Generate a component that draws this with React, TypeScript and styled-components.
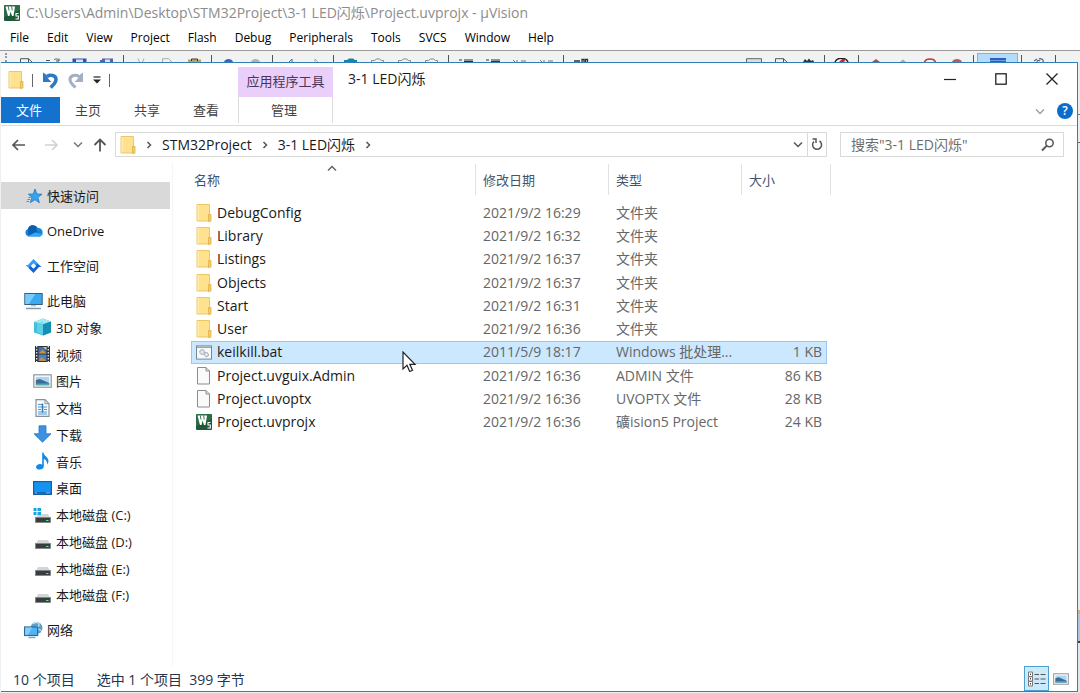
import React from 'react';
import styled, { createGlobalStyle, css } from 'styled-components';

const font = '"Open Sans", "Noto Sans CJK SC", sans-serif';
const accent = '#2f7fb8';

const GlobalStyle = createGlobalStyle`
  *, *::before, *::after { box-sizing: border-box; }
  body { margin: 0; background: #fff; font-family: ${font}; font-size: 13px; color: #1a1a1a; }
  button, input { font: inherit; color: inherit; }
  button { border: 0; padding: 0; background: none; }
  svg { display: block; flex: none; }
  ul { list-style: none; margin: 0; padding: 0; }
`;

/* ---------- IDE behind the explorer ---------- */

const Desktop = styled.div`
  display: flex;
  flex-direction: column;
  min-height: 100vh;
  overflow: hidden;
`;

const IdeTitle = styled.header`
  display: flex;
  align-items: center;
  gap: 6px;
  height: 26px;
  padding-left: 4px;
  color: #8c8c8c;
  font-size: 14px;
  line-height: 18px;
  white-space: nowrap;
`;

const MenuBar = styled.nav`
  display: flex;
  align-items: center;
  gap: 18px;
  height: 24px;
  padding-left: 10px;
`;

const MenuItem = styled.button`
  font-size: 12px;
  font-weight: 500;
  line-height: 18px;
  color: #000;
`;

const IdeToolbar = styled.div`
  display: flex;
  align-items: flex-end;
  height: 12px;
  overflow: hidden;
  border-top: 1px solid #9a9a9a;
  background: #f2f2f2;
  padding-left: 5px;
`;

const Grip = styled.span`
  width: 2px;
  height: 9px;
  margin-right: 5px;
  border-left: 2px dotted #999;
`;

const ToolButton = styled.button<{ $on?: boolean }>`
  display: flex;
  flex: none;
  align-items: flex-end;
  justify-content: center;
  width: ${p => (p.$on ? 41 : 27)}px;
  height: 9px;
  ${p => p.$on && css`background: #b5dbfa; border: 1px solid #7db4e4; border-bottom: 0;`}
`;

const ToolSep = styled.span`
  flex: none;
  width: 1px;
  height: 7px;
  margin: 0 3px;
  background: #555;
`;

const ToolGap = styled.span`
  flex: none;
  width: 146px;
`;

const Backdrop = styled.main`
  display: flex;
  flex: 1;
  padding: 0 2px 1px 1px;
  background: #eef0f2 linear-gradient(
    #e9edf2 0 52px, #6d7680 52px 53px, #e9edf2 53px 80px, #5d6b78 80px 81px,
    #e3ebf2 81px 548px, #d9b27a 548px 552px, #a9c6e4 552px 579px, #33404e 579px 581px, #dfe7ee 581px
  ) right top / 2px 100% no-repeat;
`;

/* ---------- Explorer window ---------- */

const Window = styled.section`
  display: flex;
  flex: 1;
  flex-direction: column;
  min-width: 0;
  border: 1px solid ${accent};
  border-left: 0;
  background: #fff;
`;

const TitleBar = styled.div`
  display: flex;
  height: 34px;
`;

const QuickTools = styled.div`
  display: flex;
  flex: none;
  align-items: center;
  gap: 8px;
  width: 237px;
  padding-left: 7px;
`;

const Divider = styled.span`
  width: 1px;
  height: 13px;
  background: #666;
`;

const ContextLabel = styled.div`
  flex: none;
  width: 95px;
  margin-top: 4px;
  background: #ebcffb;
  color: #4a3556;
  line-height: 28px;
  text-align: center;
`;

const WindowTitle = styled.h1`
  flex: 1;
  margin: 0 0 0 15px;
  font-size: 14px;
  font-weight: 400;
  line-height: 32px;
`;

const Caption = styled.div`
  display: flex;
  height: 32px;
`;

const CaptionButton = styled.button`
  display: grid;
  place-items: center;
  width: 51px;
`;

const Ribbon = styled.div`
  display: flex;
  height: 29px;
  border-bottom: 1px solid #dadbdc;
`;

const Tab = styled.button<{ $kind?: 'file' | 'context' }>`
  width: 59px;
  height: 26px;
  padding-right: 3px;
  line-height: 26px;
  color: #444;
  ${p => p.$kind === 'file' && css`background: #1272ce; color: #fff;`}
  ${p => p.$kind === 'context' && css`
    width: 95px;
    border: solid #dcdcdc;
    border-width: 0 1px;
    margin-left: 1px;
  `}
`;

const RibbonEnd = styled.div`
  display: flex;
  align-items: center;
  gap: 12px;
  margin-left: auto;
  padding-right: 4px;
`;

const HelpButton = styled.button`
  width: 16px;
  height: 16px;
  border-radius: 8px;
  background: #0b6ccb;
  color: #fff;
  font-size: 12px;
  font-weight: 600;
  line-height: 16px;
`;

const NavRow = styled.div`
  display: flex;
  align-items: center;
  height: 37px;
  padding: 0 13px 0 10px;
`;

const NavButtons = styled.div`
  display: grid;
  grid-template-columns: 33px 29px 20px 14px;
  align-items: center;
  margin-right: 8px;
`;

const AddressBar = styled.div`
  display: flex;
  flex: 1;
  align-items: center;
  gap: 10px;
  height: 25px;
  padding-left: 4px;
  border: 1px solid #d9d9d9;
`;

const Crumb = styled.button`
  font-size: 14px;
  line-height: 20px;
`;

const AddressEnd = styled.div`
  display: flex;
  align-items: center;
  gap: 4px;
  height: 23px;
  margin-left: auto;
`;

const Refresh = styled.button`
  display: grid;
  place-items: center;
  width: 19px;
  height: 23px;
  border-left: 1px solid #d9d9d9;
`;

const SearchBox = styled.label`
  display: flex;
  align-items: center;
  width: 224px;
  height: 25px;
  margin-left: 13px;
  padding: 0 8px 0 10px;
  border: 1px solid #d9d9d9;
`;

const SearchInput = styled.input`
  flex: 1;
  min-width: 0;
  padding: 0;
  border: 0;
  outline: 0;
  background: none;
  font-size: 14px;
  &::placeholder { color: #6d6d6d; opacity: 1; }
`;

const Body = styled.div`
  display: flex;
  flex: 1;
`;

const SideNav = styled.nav`
  flex: none;
  width: 172px;
  padding-top: 19px;
  border-right: 1px solid #f5f5f5;
`;

const SideGroup = styled.ul`
  margin-bottom: 8px;
`;

const DriveGroup = styled(SideGroup)`
  display: grid;
  grid-template-rows: repeat(12, minmax(0, 1fr));
  height: 321px;
`;

const SideLink = styled.a<{ $nested?: boolean; $active?: boolean }>`
  display: flex;
  align-items: center;
  gap: 4px;
  width: 169px;
  height: 27px;
  padding-left: ${p => (p.$nested ? 32 : 23)}px;
  background: ${p => (p.$active ? '#d9d9d9' : 'transparent')};
  color: #1a1a1a;
  text-decoration: none;
  white-space: nowrap;
`;

const Pane = styled.div`
  position: relative;
  flex: 1;
  min-width: 0;
  padding: 1px 0 0 18px;
`;

const FileTable = styled.table`
  width: 636px;
  height: 270px;
  border-collapse: collapse;
  table-layout: fixed;
`;

const HeadCell = styled.th<{ $w: number; $last?: boolean }>`
  position: relative;
  width: ${p => p.$w}px;
  height: 37px;
  padding: 0 0 6px 7px;
  font-weight: 400;
  text-align: left;
  &:first-child { padding-left: 3px; }
  &::after {
    content: '';
    position: absolute;
    top: 0;
    right: ${p => (p.$last ? -4 : 0)}px;
    width: 1px;
    height: 31px;
    background: #e2e2e2;
  }
`;

const SortButton = styled.button`
  color: #44546f;
`;

const SortMark = styled.span`
  position: absolute;
  top: 1px;
  left: 50%;
  margin-left: -7px;
`;

const Row = styled.tr<{ $selected?: boolean }>`
  ${p => p.$selected && css`
    background: #cce8ff;
    outline: 1px solid #99c8ec;
    outline-offset: -1px;
  `}
`;

const Cell = styled.td<{ $right?: boolean }>`
  padding: 0 5px 0 7px;
  color: #666;
  font-size: 14px;
  line-height: 20px;
  text-align: ${p => (p.$right ? 'right' : 'left')};
  white-space: nowrap;
`;

const NameCell = styled(Cell)`
  padding-left: 5px;
  color: #1a1a1a;
`;

const FileName = styled.span`
  display: flex;
  align-items: center;
  gap: 5px;
`;

const Pointer = styled.span`
  position: absolute;
  top: 188px;
  left: 229px;
`;

const StatusBar = styled.footer`
  display: flex;
  align-items: center;
  height: 25px;
  padding: 0 8px 0 12px;
  gap: 22px;
  color: #26354f;
  font-size: 14px;
`;

const ViewButtons = styled.div`
  display: flex;
  gap: 4px;
  margin-left: auto;
`;

const ViewButton = styled.button<{ $on?: boolean }>`
  display: grid;
  place-items: center;
  width: ${p => (p.$on ? 25 : 16)}px;
  height: 25px;
  ${p => p.$on && css`background: #cdeafb; border: 1px solid #4c9fce;`}
`;

/* ---------- Drawings ---------- */

const Svg = ({ w = 16, h = 16, box, children }: { w?: number; h?: number; box?: string; children: React.ReactNode }) => (
  <svg width={w} height={h} viewBox={box ?? `0 0 ${w} ${h}`} fill="none" aria-hidden="true">{children}</svg>
);

const KeilIcon = () => (
  <Svg>
    <rect width="16" height="16" rx="1" fill="#1f5a38" />
    <path d="M0 0h16v5L0 12z" fill="#357a52" opacity=".6" />
    <path d="M1.500 1.500h9.500L9.500 11H8L6.500 6.500 5.500 11H4z" fill="#fff" />
    <path d="M4.300 1.500l.7 4M7.700 1.500l.5 4" stroke="#2b6b46" strokeWidth=".9" />
    <path d="M14.500 8.500H12v2.500h2.300V14h-2.800" stroke="#fff" strokeWidth="1.100" />
  </Svg>
);

const FolderIcon = () => (
  <Svg w={16} h={18}>
    <path d="M1 .5h12.500v16.500H1z" fill="#ffe28d" stroke="#ebc765" />
    <path d="M1.500 1h1.500v15.500H1.500z" fill="#ffebae" />
    <path d="M12.500 10.500h2.500v6.500l-2.500.5z" fill="#f6cf62" stroke="#deb04a" strokeWidth=".8" />
  </Svg>
);

const FileIcon = () => (
  <Svg w={16} h={18}>
    <path d="M1.500.5h8.500l3.500 3.500v13h-12z" fill="#fafafa" stroke="#8c8c8c" />
    <path d="M10 .5v3.500h3.500" stroke="#8c8c8c" />
  </Svg>
);

const BatIcon = () => (
  <Svg w={16} h={15} box="0 0 17 15">
    <rect x=".5" y=".5" width="16" height="14" fill="#f8f9fa" stroke="#6f8090" />
    <path d="M1 2h15" stroke="#94a5b4" strokeWidth="1.500" />
    <circle cx="6.500" cy="7" r="2.600" fill="#d3dae0" stroke="#8e9aa5" strokeDasharray="1.400 .6" />
    <circle cx="6.500" cy="7" r=".8" fill="#fff" />
    <circle cx="11" cy="9.800" r="2.300" fill="#cfdcea" stroke="#8799ad" strokeDasharray="1.400 .6" />
    <circle cx="11" cy="9.800" r=".7" fill="#fff" />
  </Svg>
);

const StarIcon = () => (
  <Svg w={19}>
    <path d="M11 1l1.900 5 5.100.2-4.200 3.200 1.600 5.300-4.400-3-4.700 3 1.700-5.300L4.300 6.200l5-.2z" fill="#36a3ee" stroke="#1b78c4" strokeWidth=".8" />
    <path d="M4.500 9.500h2.200M3.500 11.500h2.800M2.500 13.500H5" stroke="#3f8fc9" />
  </Svg>
);

const CloudIcon = () => (
  <Svg w={19}>
    <path d="M4.500 13.500a4 4 0 01-.6-7.600A5.300 5.300 0 0113.600 5a4.300 4.300 0 015 4.500 3.700 3.700 0 01-3.200 4z" fill="#1684d8" />
    <path d="M4 5.900A5.300 5.300 0 0113.600 5l-1.900 1.300 4.700 6.900-12-1.200z" fill="#0a5fb0" />
    <path d="M3.500 13.200l8-4 7 2.300a3.500 3.500 0 01-3 2z" fill="#31a8f0" />
  </Svg>
);

const WorkIcon = () => (
  <Svg w={19}>
    <path d="M9.500 1l5 5-2.500 2.500L9.500 6 5.500 10.500 1.500 7H4z" fill="#2f9df5" />
    <path d="M9.500 15l-5-5L7 7.500 9.500 10l4-4.500L17.500 9H15z" fill="#1763d6" />
    <path d="M9.500 5.300l2.700 2.700-2.700 2.700L6.800 8z" fill="#fff" />
  </Svg>
);

const PcIcon = () => (
  <Svg w={19} h={18}>
    <rect x=".8" y="1.500" width="17.400" height="11" fill="#3aa9f2" stroke="#34617f" />
    <path d="M1.300 2h10L5 12H1.300z" fill="#79cbfa" />
    <path d="M7 13h5v1.500H7z" fill="#b9c6cf" />
    <path d="M2 16.500h15" stroke="#8799a5" strokeWidth="1.500" />
  </Svg>
);

const CubeIcon = () => (
  <Svg w={19} h={18}>
    <path d="M1 4l9-3.500L18 3.500v11L10 17.500 1 14.500z" fill="#3fc0dc" />
    <path d="M1 4l9-3.500L18 3.500l-8 2.700z" fill="#a5e8f4" />
    <path d="M10 6.200l8-2.700v11l-8 3z" fill="#168fb5" />
    <path d="M4 5.500l6-2v13l-6-2z" fill="#6bd6ea" opacity=".7" />
  </Svg>
);

const VideoIcon = () => (
  <Svg w={19} h={18}>
    <rect x="2" y="1" width="15" height="16" fill="#2e3236" />
    <path d="M3.700 1v16M15.300 1v16" stroke="#ddd" strokeWidth="1.400" strokeDasharray="1.500 1.500" />
    <rect x="5.500" y="2" width="8" height="6.500" fill="#3d6fb5" />
    <rect x="5.500" y="9.500" width="8" height="6.500" fill="#4a80c6" />
    <path d="M5.500 8.500l4-4 4 4zM5.500 16l3-4 5 4z" fill="#c98e3e" />
    <path d="M10 2h3.500v3z" fill="#e8cd55" />
  </Svg>
);

const PictureIcon = ({ w = 19, h = 14 }: { w?: number; h?: number }) => (
  <Svg w={w} h={h} box="0 0 19 14">
    <rect x=".8" y=".8" width="17.400" height="12.400" fill="#fff" stroke="#8d9499" strokeWidth="1.200" />
    <rect x="2.800" y="2.800" width="13.400" height="8.400" fill="#a9d6f5" />
    <path d="M2.800 6l4-1 9.400 4v2.200H2.800z" fill="#3c6b94" />
    <path d="M2.800 9.500h13.400v1.700H2.800z" fill="#55a6ad" />
  </Svg>
);

const DocIcon = () => (
  <Svg w={19} h={18}>
    <path d="M3 .7h9l4 4v12.600H3z" fill="#f6f9fb" stroke="#8a9299" strokeWidth="1.200" />
    <path d="M12 .7v4h4" stroke="#8a9299" />
    <path d="M5 5.500h4M5 8h9M5 10.500h3M11 10.500h3M5 13h9M5 15h9" stroke="#4f9bd2" strokeWidth="1.200" />
    <path d="M9.500 4.500v9" stroke="#2f7ab8" strokeWidth="1.500" />
  </Svg>
);

const DownIcon = () => (
  <Svg w={19} h={18}>
    <path d="M6 .8h7v8h5L9.500 17.200 1 8.800h5z" fill="#3b92e4" stroke="#2c73bb" strokeWidth=".8" />
  </Svg>
);

const MusicIcon = () => (
  <Svg w={19} h={18}>
    <path d="M9.200.5h1.300c.3 3.500 5 4.500 5 8.500 0 1.500-.7 2.500-1.500 3.500.5-3-1-4.500-3.200-5.500v7.500c0 1.800-2 3-4 3s-3.800-1-3.800-2.600 2-3 4-3c.8 0 1.600.2 2.200.5z" fill="#1389e6" />
  </Svg>
);

const DesktopIcon = () => (
  <Svg w={19} h={14}>
    <rect x=".6" y=".6" width="17.800" height="12.800" fill="#1593f2" stroke="#1460a5" strokeWidth="1.200" />
    <path d="M1.200 11.800h16.600" stroke="#0e65b8" strokeWidth="1.500" />
    <path d="M2.500 11.800h1M13.500 11.800h1M15.500 11.800h1" stroke="#fff" />
  </Svg>
);

const DriveIcon = ({ system }: { system?: boolean }) => (
  <Svg w={19} h={18}>
    <path d="M5 8h10l2 4H3z" fill="#d3d5d7" />
    <rect x="2.500" y="11.500" width="15" height="5" fill="#3a3d40" stroke="#808487" strokeWidth=".8" />
    <path d="M13 14.500h2.500" stroke="#62e089" />
    {system && <path d="M.5 2h3v3h-3zM4.500 2h3.500v3H4.500zM.5 6h3v3h-3zM4.500 6h3.500v3H4.500z" fill="#16a7e0" />}
  </Svg>
);

const NetworkIcon = () => (
  <Svg w={19} h={18}>
    <circle cx="12.500" cy="7" r="6" fill="#5e9fc4" />
    <path d="M9 3c2-2 5-2 6 0s-2 2-2 4 4 1 4 3" stroke="#b7dcea" strokeWidth="1.500" />
    <rect x=".6" y="6" width="13" height="8.500" fill="#4fb4f5" stroke="#2a6c9d" strokeWidth="1.200" />
    <path d="M1.200 6.600h7L4 14H1.200z" fill="#86cdf9" />
    <path d="M4.500 16.500h7" stroke="#8fa5b3" strokeWidth="1.500" />
  </Svg>
);

const Chevron = ({ dir = 'right', color = '#555' }: { dir?: 'right' | 'down' | 'up'; color?: string }) =>
  dir === 'right' ? (
    <Svg w={6} h={8}><path d="M1.500 1l3 3-3 3" stroke={color} strokeWidth="1.500" /></Svg>
  ) : (
    <Svg w={10} h={7}><path d={dir === 'down' ? 'M1 1.500l4 4 4-4' : 'M1 5.500l4-4 4 4'} stroke={color} strokeWidth="1.500" /></Svg>
  );

const Arrow = ({ dir }: { dir: 'left' | 'right' | 'up' }) => (
  <Svg w={14} h={14}>
    {dir === 'left' && <path d="M14 7H2M7 2L2 7l5 5" stroke="#555" strokeWidth="1.700" />}
    {dir === 'right' && <path d="M1 7h12M8 2l5 5-5 5" stroke="#d2d2d2" strokeWidth="1.600" />}
    {dir === 'up' && <path d="M7 13.500v-12M1.500 7L7 1.500 12.500 7" stroke="#555" strokeWidth="1.800" />}
  </Svg>
);

/* Upper edges of the IDE toolbar glyphs; the rest lies under the explorer. */
const glyphs: Record<string, React.ReactNode> = {
  page: <path d="M2.500 4V.7h8L14 4M10.500.7V4" stroke="#555" />,
  open: <path d="M1 2.500h4M9 2c2-2 4-1 5 1M14 .5V3h-3" stroke="#555" />,
  save: <><path d="M.5 4V.5h14V4z" fill="#3b4ea8" /><path d="M4 1.500h7V4H4z" fill="#dfe5f5" /></>,
  saveAll: <><path d="M1 4V2h2V.5h11V4z" fill="#5661b5" /><path d="M6 1.500h5V4H6z" fill="#dfe5f5" /></>,
  cut: <path d="M5 .5L6.500 4M11 .5L9.500 4" stroke="#aaa" />,
  copy: <path d="M2.500 4V.7h6L11 3v1" stroke="#aaa" />,
  paste: <><path d="M1 4V1.500h13V4z" fill="#b9a45a" /><path d="M4.500 3V1h6v2" stroke="#333" /></>,
  undo: <path d="M3 4c1-4 8-4 9 0z" fill="#3a62c4" />,
  redo: <path d="M3 4c1-4 8-4 9 0z" fill="#aeb3ba" />,
  back: <path d="M7 4l3-3v3" stroke="#3a6fa5" />,
  next: <path d="M9 4L6 1v3" stroke="#aaa" />,
  flag: <path d="M1 4V2h3l2-1.500h4L12 2h2v2z" fill="#1583ad" />,
  flagOff: <path d="M1.500 4V2.500h3l2-1.500h3l2 1.500h2V4" stroke="#888" />,
  indent: <path d="M1 2h3M6 2h9M6 3.500h9" stroke="#333" />,
  comment: <path d="M1 2l2 2M5 2v2M9 3h5" stroke="#777" />,
  find: <path d="M1 3h6M9 4V1.500h2V4M12.500 4V1.500h2V4" stroke="#333" strokeWidth="1.300" />,
  combo: <path d="M.5 4V.7h15V4" stroke="#666" fill="#ddd" />,
  ruler: <path d="M3 4l2-3 2 2 2-2.500L11 3l2-1 1 2z" fill="#333" />,
  stop: <><path d="M1 4C3-1 12-1 14 4" stroke="#222" strokeWidth="1.500" /><path d="M5 4l3-3h4l-2 3z" fill="#d02828" /></>,
  diamond: <path d="M4 4l4-3 4 3z" fill="#b34a44" />,
  diamondOff: <path d="M5 4l3-2.500L11 4z" fill="#aaa" />,
  ring: <path d="M2.500 4C4 0 12 0 13.500 4" stroke="#c03a34" strokeWidth="1.500" />,
  ball: <path d="M3 4c1-4 9-4 10 0z" fill="#c25a54" />,
  win: <><path d="M0 4V0h16v4z" fill="#2b5fc4" /><path d="M0 2.500h16" stroke="#6f9ae6" /></>,
  wrench: <path d="M3 3l3-2M8 .5c3 0 5 1.500 4 3.500M6 4c0-2 2-2 3-1" stroke="#5c6f85" strokeWidth="1.300" />,
};

const toolItems = [
  'page', 'open', 'save', 'saveAll', '|', 'cut', 'copy', 'paste', '|', 'undo', 'redo', '|', 'back', 'next', '|',
  'flag', 'flagOff', 'flagOff', 'flagOff', '|', 'indent', 'indent', 'comment', 'comment', '|', 'find', 'gap',
  'combo', 'page', 'ruler', '|', 'stop', '|', 'diamond', 'diamondOff', 'ring', 'ball', '|', 'win', '|', 'wrench', '|',
];

const menus = ['File', 'Edit', 'View', 'Project', 'Flash', 'Debug', 'Peripherals', 'Tools', 'SVCS', 'Window', 'Help'];

const topLinks = [
  { label: '快速访问', icon: <StarIcon />, active: true },
  { label: 'OneDrive', icon: <CloudIcon /> },
  { label: '工作空间', icon: <WorkIcon /> },
];

const pcLinks = [
  { label: '3D 对象', icon: <CubeIcon /> },
  { label: '视频', icon: <VideoIcon /> },
  { label: '图片', icon: <PictureIcon /> },
  { label: '文档', icon: <DocIcon /> },
  { label: '下载', icon: <DownIcon /> },
  { label: '音乐', icon: <MusicIcon /> },
  { label: '桌面', icon: <DesktopIcon /> },
  { label: '本地磁盘 (C:)', icon: <DriveIcon system /> },
  { label: '本地磁盘 (D:)', icon: <DriveIcon /> },
  { label: '本地磁盘 (E:)', icon: <DriveIcon /> },
  { label: '本地磁盘 (F:)', icon: <DriveIcon /> },
];

const files = [
  { name: 'DebugConfig', date: '2021/9/2 16:29', type: '文件夹', size: '', icon: <FolderIcon /> },
  { name: 'Library', date: '2021/9/2 16:32', type: '文件夹', size: '', icon: <FolderIcon /> },
  { name: 'Listings', date: '2021/9/2 16:37', type: '文件夹', size: '', icon: <FolderIcon /> },
  { name: 'Objects', date: '2021/9/2 16:37', type: '文件夹', size: '', icon: <FolderIcon /> },
  { name: 'Start', date: '2021/9/2 16:31', type: '文件夹', size: '', icon: <FolderIcon /> },
  { name: 'User', date: '2021/9/2 16:36', type: '文件夹', size: '', icon: <FolderIcon /> },
  { name: 'keilkill.bat', date: '2011/5/9 18:17', type: 'Windows 批处理...', size: '1 KB', icon: <BatIcon />, selected: true },
  { name: 'Project.uvguix.Admin', date: '2021/9/2 16:36', type: 'ADMIN 文件', size: '86 KB', icon: <FileIcon /> },
  { name: 'Project.uvoptx', date: '2021/9/2 16:36', type: 'UVOPTX 文件', size: '28 KB', icon: <FileIcon /> },
  { name: 'Project.uvprojx', date: '2021/9/2 16:36', type: '礦ision5 Project', size: '24 KB', icon: <KeilIcon /> },
];

export default function App() {
  return (
    <Desktop>
      <GlobalStyle />
      <IdeTitle>
        <KeilIcon />
        <span>C:\Users\Admin\Desktop\STM32Project\3-1 LED闪烁\Project.uvprojx - µVision</span>
      </IdeTitle>
      <MenuBar>
        {menus.map(m => <MenuItem key={m}>{m}</MenuItem>)}
      </MenuBar>
      <IdeToolbar>
        <Grip />
        {toolItems.map((t, i) =>
          t === '|' ? <ToolSep key={i} /> : t === 'gap' ? <ToolGap key={i} /> : (
            <ToolButton key={i} $on={t === 'win'} aria-label={t}>
              <Svg w={16} h={4}>{glyphs[t]}</Svg>
            </ToolButton>
          ))}
      </IdeToolbar>

      <Backdrop>
        <Window>
          <TitleBar>
            <QuickTools>
              <FolderIcon />
              <Divider />
              <button aria-label="撤消">
                <Svg w={18} h={18}>
                  <path d="M6 5.500c3-2 9-1.500 9 3 0 3.500-2.500 5-5.500 8" stroke="#2f78c4" strokeWidth="3.500" />
                  <path d="M2 1.500v9.500h8.500L7.500 8 5 3.500z" fill="#2f78c4" />
                </Svg>
              </button>
              <button aria-label="恢复">
                <Svg w={18} h={18}>
                  <path d="M12 5.500c-3-2-9-1.500-9 3 0 3.500 2.500 5 5.500 8" stroke="#a3afc4" strokeWidth="3" />
                  <path d="M16 1.500v9.500H7.500L10.500 8 13 3.500z" fill="#a3afc4" />
                </Svg>
              </button>
              <button aria-label="自定义快速访问工具栏">
                <Svg w={8} h={8}><path d="M.5 1h7" stroke="#333" strokeWidth="1.300" /><path d="M0 3.500h8l-4 4z" fill="#222" /></Svg>
              </button>
              <Divider />
            </QuickTools>
            <ContextLabel>应用程序工具</ContextLabel>
            <WindowTitle>3-1 LED闪烁</WindowTitle>
            <Caption>
              <CaptionButton aria-label="最小化"><Svg w={12} h={12}><path d="M0 6.500h12" stroke="#222" strokeWidth="1.200" /></Svg></CaptionButton>
              <CaptionButton aria-label="最大化"><Svg w={12} h={12}><rect x=".8" y=".8" width="10.400" height="10.400" stroke="#222" strokeWidth="1.300" /></Svg></CaptionButton>
              <CaptionButton aria-label="关闭"><Svg w={12} h={12}><path d="M.5.5l11 11M11.500.5l-11 11" stroke="#222" strokeWidth="1.300" /></Svg></CaptionButton>
            </Caption>
          </TitleBar>

          <Ribbon>
            <Tab $kind="file">文件</Tab>
            <Tab>主页</Tab>
            <Tab>共享</Tab>
            <Tab>查看</Tab>
            <Tab $kind="context">管理</Tab>
            <RibbonEnd>
              <Chevron dir="down" color="#a0a0a0" />
              <HelpButton>?</HelpButton>
            </RibbonEnd>
          </Ribbon>

          <NavRow>
            <NavButtons>
              <button aria-label="后退"><Arrow dir="left" /></button>
              <button aria-label="前进"><Arrow dir="right" /></button>
              <button aria-label="最近位置"><Chevron dir="down" color="#777" /></button>
              <button aria-label="上移"><Arrow dir="up" /></button>
            </NavButtons>
            <AddressBar>
              <FolderIcon />
              <Chevron />
              <Crumb>STM32Project</Crumb>
              <Chevron />
              <Crumb>3-1 LED闪烁</Crumb>
              <Chevron />
              <AddressEnd>
                <button aria-label="以前的位置"><Chevron dir="down" /></button>
                <Refresh aria-label="刷新">
                  <Svg w={12} h={13}>
                    <path d="M8.500 3A4.500 4.500 0 113 3.500" stroke="#555" strokeWidth="1.500" />
                    <path d="M1.500 1h3.500v4" stroke="#555" strokeWidth="1.500" />
                  </Svg>
                </Refresh>
              </AddressEnd>
            </AddressBar>
            <SearchBox>
              <SearchInput aria-label="搜索" placeholder={'搜索"3-1 LED闪烁"'} />
              <Svg w={14} h={14}>
                <circle cx="8.500" cy="5" r="3.700" stroke="#555" strokeWidth="1.500" />
                <path d="M5.800 7.700L1 12.500" stroke="#555" strokeWidth="1.900" />
              </Svg>
            </SearchBox>
          </NavRow>

          <Body>
            <SideNav>
              {topLinks.map(l => (
                <SideGroup key={l.label}>
                  <li><SideLink href="#" $active={l.active}>{l.icon}{l.label}</SideLink></li>
                </SideGroup>
              ))}
              <DriveGroup>
                <li><SideLink href="#"><PcIcon />此电脑</SideLink></li>
                {pcLinks.map(l => (
                  <li key={l.label}><SideLink href="#" $nested>{l.icon}{l.label}</SideLink></li>
                ))}
              </DriveGroup>
              <SideGroup>
                <li><SideLink href="#"><NetworkIcon />网络</SideLink></li>
              </SideGroup>
            </SideNav>

            <Pane>
              <FileTable>
                <thead>
                  <tr>
                    <HeadCell $w={285}>
                      <SortMark><Chevron dir="up" color="#666" /></SortMark>
                      <SortButton>名称</SortButton>
                    </HeadCell>
                    <HeadCell $w={133}><SortButton>修改日期</SortButton></HeadCell>
                    <HeadCell $w={133}><SortButton>类型</SortButton></HeadCell>
                    <HeadCell $w={85} $last><SortButton>大小</SortButton></HeadCell>
                  </tr>
                </thead>
                <tbody>
                  {files.map(f => (
                    <Row key={f.name} $selected={f.selected}>
                      <NameCell><FileName>{f.icon}{f.name}</FileName></NameCell>
                      <Cell>{f.date}</Cell>
                      <Cell>{f.type}</Cell>
                      <Cell $right>{f.size}</Cell>
                    </Row>
                  ))}
                </tbody>
              </FileTable>
              <Pointer>
                <Svg w={15} h={22}>
                  <path d="M1 1v17l4-3.700 2.700 6.200 2.800-1.200-2.700-6H13z" fill="#fff" stroke="#222" strokeWidth="1.200" />
                </Svg>
              </Pointer>
            </Pane>
          </Body>

          <StatusBar>
            <span>10 个项目</span>
            <span>选中 1 个项目&nbsp; 399 字节</span>
            <ViewButtons>
              <ViewButton $on aria-label="详细信息">
                <Svg w={18} h={16}>
                  <path d="M.5 1h4v4.500h-4zM.5 5.700h4v4.500h-4zM.5 10.400h4V15h-4z" fill="#fff" stroke="#777" />
                  <path d="M2.500 2.500v1.500M2.500 7v1.500M2.500 12v1.500" stroke="#444" />
                  <path d="M6.500 3.500h4.500M12.500 3.500h5M6.500 8h4.500M12.500 8h5M6.500 12.500h4.500M12.500 12.500h5" stroke="#555" strokeWidth="1.200" />
                </Svg>
              </ViewButton>
              <ViewButton aria-label="大缩略图"><PictureIcon w={16} h={12} /></ViewButton>
            </ViewButtons>
          </StatusBar>
        </Window>
      </Backdrop>
    </Desktop>
  );
}
